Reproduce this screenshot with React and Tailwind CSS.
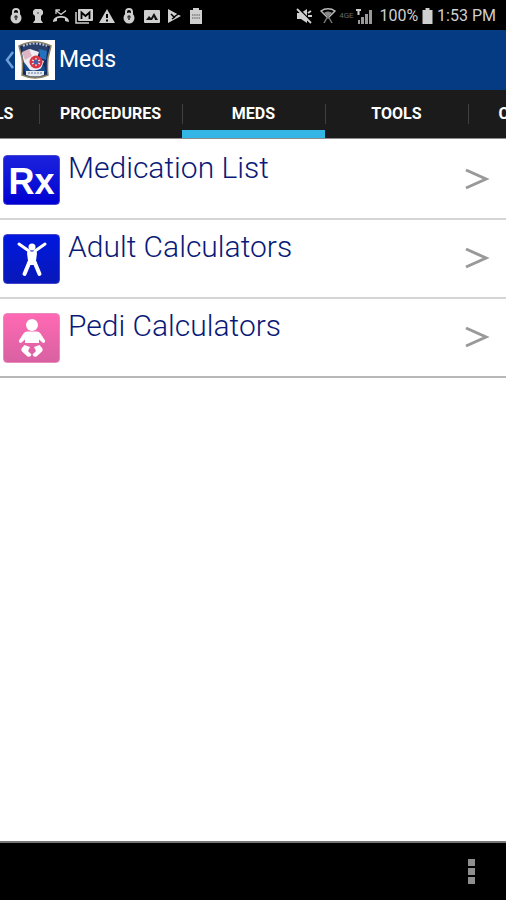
const TABS = ["Protocols", "Procedures", "Meds", "Tools", "Contacts"];

const ITEMS = [
  { label: "Medication List", icon: RxIcon },
  { label: "Adult Calculators", icon: AdultIcon },
  { label: "Pedi Calculators", icon: BabyIcon },
];

function Glyph({ children }) {
  return (
    <svg width="16" height="16" viewBox="0 0 16 16" fill="currentColor" aria-hidden="true">
      {children}
    </svg>
  );
}

function LockGlyph() {
  return (
    <Glyph>
      <path d="M5 7V4a3 3 0 0 1 6 0v3" fill="none" stroke="currentColor" strokeWidth="2" />
      <circle cx="8" cy="10" r="5.5" />
      <circle cx="8" cy="9" r="1.7" fill="#333" />
      <path d="M7 9h2v3H7Z" fill="#555" />
    </Glyph>
  );
}

function NotificationIcons() {
  return (
    <div className="flex w-[196px] items-center justify-between text-[#cfcfcf]">
      <LockGlyph />
      <Glyph>
        <path d="M5 1h6l2 2v3l-2 2v4l2 3H3l2-3V8L3 6V3Z" />
        <circle cx="8" cy="5" r="1" fill="#777" />
      </Glyph>
      <Glyph>
        <path d="M0 14c0-5 5-6 8-6s8 1 8 6l-4-1v-2.500c-2-1-6-1-8 0V13Z" />
        <path d="M3 2.500l5 4 5-4M3 6V2h4" fill="none" stroke="currentColor" strokeWidth="1.300" />
      </Glyph>
      <svg width="18" height="16" viewBox="0 0 18 16" fill="currentColor" aria-hidden="true">
        <path d="M1 4v11h13" fill="none" stroke="currentColor" strokeWidth="1.500" />
        <rect x="3" y="1" width="15" height="12" rx="1" />
        <path d="M6.500 11V4.500l4 3.500 4-3.500V11" fill="none" stroke="#000" strokeWidth="1.800" />
      </svg>
      <Glyph>
        <path d="M8 1l8 14H0Z" />
        <path d="M7 6h2v4H7Zm0 5.500h2v2H7Z" fill="#000" />
      </Glyph>
      <LockGlyph />
      <Glyph>
        <rect y="2" width="16" height="13" rx="1" />
        <path d="M2 12l3-4 2 2 3-5 4 7Z" fill="#111" />
        <path d="M8 12l2-3 1 3Z" fill="#cfcfcf" />
      </Glyph>
      <Glyph>
        <path d="M2 1l13 7L2 15Z" />
        <path d="M5 6l3 3 7-5M6 11l3-2" fill="none" stroke="#000" strokeWidth="1.500" />
      </Glyph>
      <Glyph>
        <path d="M2 2h3V0h6v2h3v14H2Z" />
        <path d="M4 7h8M4 10h8" stroke="#555" strokeWidth="1.200" strokeDasharray="1.500 0.700" />
      </Glyph>
    </div>
  );
}

function SystemIcons() {
  return (
    <div className="flex items-center text-[#cfcfcf]">
      <Glyph>
        <path d="M1 5h4l6-4v14l-6-4H1Z" />
        <path d="M2 0l14 14" stroke="#000" strokeWidth="1.500" />
        <path d="M1 1l14 14M12 5l3-2M12 8h4" stroke="currentColor" strokeWidth="1.800" />
      </Glyph>
      <svg className="ml-2" width="16" height="16" viewBox="0 0 16 16" fill="none" aria-hidden="true">
        <path d="M1 3c4-3 10-3 14 0L8 10Z" stroke="#bbb" strokeWidth="1.500" />
        <path d="M4 5c3-2 5-2 8 0l-4 4Z" fill="#888" />
        <path d="M8 8l-4 7M8 8l4 7" stroke="#777" strokeWidth="1.500" />
      </svg>
      <span className="w-5 text-center text-[8px] leading-none text-[#686868]">4GE</span>
      <svg width="17" height="17" viewBox="0 0 17 17" fill="currentColor" aria-hidden="true">
        <path d="M0 1h5v2H3.500v4h-2V3H0Z" />
        <path d="M2 12h2v4H2ZM5 9h3v7H5ZM9 6h3v10H9ZM13 2h3v14h-3Z" fill="#999" />
      </svg>
      <span className="ml-1.5 text-base">100%</span>
      <svg className="mx-1" width="11" height="16" viewBox="0 0 10 16" fill="currentColor" aria-hidden="true">
        <path d="M3 0h4v2h3v14H0V2h3Z" />
      </svg>
      <span className="text-base">1:53 PM</span>
    </div>
  );
}

function Logo() {
  return (
    <svg width="40" height="40" viewBox="0 0 40 40" aria-hidden="true">
      <rect width="40" height="40" fill="#fff" />
      <path d="M4 6Q20-2 36 6L33 18q-1 10 0 17-13 6-26 0 1-9 0-17Z" fill="#102c63" stroke="#8b8162" strokeWidth="1.500" />
      <path d="M7 7q13-6 26 0l-1 5H8Z" fill="#29416c" />
      <path d="M8 6q12-5 24 0" fill="none" stroke="#b9c3d0" strokeWidth="2" strokeDasharray="2 1.300" />
      <path d="M7 13l8-4 9 3-2 6 7 3-3 8-12 3-5-9Z" fill="#f0eef4" />
      <path d="M7 12l7-3 3 7-7 4Z" fill="#dfb5c4" />
      <path d="M24 9l8 2-1 9-6-2Z" fill="#2471bd" />
      <path d="M9 22l6 8 8 1 6-6 2 7H10Z" fill="#174b8f" />
      <circle cx="21" cy="22" r="6.500" fill="#dc3445" />
      <path d="M21 18v8M17 20l8 4M25 20l-8 4" stroke="#e9eefa" strokeWidth="1.300" />
      <circle cx="21" cy="22" r="2.500" fill="#4460a3" />
      <path d="M11 31h18v4q-9 3-18 0Z" fill="#e6e9ed" />
      <path d="M13 33h14" stroke="#8fa0bd" strokeWidth="1.500" strokeDasharray="2 1" />
    </svg>
  );
}

function RxIcon() {
  return (
    <span
      aria-hidden="true"
      className="flex h-[50px] w-[57px] items-center justify-center rounded-sm border border-[#4444d0] bg-linear-to-b from-[#1a20dc] to-[#0000d2] pt-1 font-['Liberation_Sans',sans-serif] text-4xl font-bold text-white"
    >
      Rx
    </span>
  );
}

function AdultIcon() {
  return (
    <span className="flex h-[50px] w-[57px] items-center justify-center rounded-sm border border-[#4444c8] bg-linear-to-b from-[#0018e0] to-[#0818b8]">
      <svg width="34" height="36" viewBox="0 0 34 36" fill="none" stroke="#fff" strokeLinecap="round" aria-hidden="true">
        <circle cx="17" cy="6" r="3.500" fill="#fff" stroke="none" />
        <path d="M4 3l10 7M30 3l-10 7" strokeWidth="3" />
        <path d="M13 9q4 3 8 0l1 3-1 8 1 4h-10l1-4-1-8Z" fill="#fff" stroke="none" />
        <path d="M14.500 21L9.500 33M19.500 21l5 12" strokeWidth="4" />
      </svg>
    </span>
  );
}

function BabyIcon() {
  return (
    <span className="flex h-[50px] w-[57px] items-center justify-center rounded-sm border border-[#e988bd] bg-linear-to-b from-[#ff69b4] to-[#d861a2]">
      <svg width="30" height="40" viewBox="0 0 30 40" fill="#fff" aria-hidden="true">
        <circle cx="15" cy="7" r="6" />
        <path d="M10 13.500h10q2 0 3.500 2l4.500 7q.5 2-2 2.500l-4-3.500V25H8v-3.500L4 25q-2.500-.5-2-2.500l4.500-7q1.500-2 3.500-2Z" />
        <path d="M7.500 27l5.500 2-2 4 3.500 3.500q-1 3-4 2l-5.500-5q-1-1-.5-3ZM22.500 27L17 29l2 4-3.500 3.500q1 3 4 2l5.500-5q1-1 .5-3Z" />
      </svg>
    </span>
  );
}

export default function App() {
  return (
    <div className="flex min-h-screen flex-col bg-white font-[Roboto,sans-serif]">
      <div className="flex h-[30px] items-center justify-between bg-black pt-0.5 pr-2.5 pl-2">
        <NotificationIcons />
        <SystemIcons />
      </div>

      <header className="flex h-[60px] items-center bg-[#053b82] pl-1">
        <button type="button" aria-label="Back" className="flex items-center">
          <svg width="11" height="24" viewBox="0 0 11 24" fill="none" stroke="#6ea2d8" strokeWidth="2.500" aria-hidden="true">
            <path d="M9 4L3 12l6 8" />
          </svg>
          <Logo />
        </button>
        <h1 className="ml-1 text-[23px] text-white">Meds</h1>
      </header>

      <nav className="flex h-[49px] justify-center overflow-hidden border-b border-[#8c8c8c] bg-[#1b1b1b]">
        {TABS.map((tab) => {
          const active = tab === "Meds";
          return (
            <a
              key={tab}
              href={`#${tab.toLowerCase()}`}
              aria-current={active ? "page" : undefined}
              className={`flex w-[143px] shrink-0 items-center border-b-8 ${active ? "border-[#33b5e5]" : "border-transparent"}`}
            >
              <span className="mt-2 flex h-5 w-full items-center justify-center border-l border-[#404040] text-base font-bold text-white uppercase">
                {tab}
              </span>
            </a>
          );
        })}
      </nav>

      <main className="flex-1 pt-0.5">
        <ul>
          {ITEMS.map(({ label, icon: Icon }) => (
            <li key={label} className="border-b-2 border-[#d5d5d5] last:border-[#b8b8b8]">
              <button type="button" className="flex h-[77px] w-full items-center pr-4 pl-[3px] text-left">
                <Icon />
                <span className="ml-2 flex-1 self-start pt-[7px] text-[30px] leading-10 font-light text-[#0a1a78]">
                  {label}
                </span>
                <svg width="25" height="24" viewBox="0 0 25 24" fill="none" stroke="#999" strokeWidth="3" aria-hidden="true">
                  <path d="M1 2l20 9-20 9" />
                </svg>
              </button>
            </li>
          ))}
        </ul>
      </main>

      <footer className="flex h-[59px] items-center justify-end border-t-2 border-[#777] bg-black pr-[31px]">
        <button type="button" aria-label="More options">
          <svg width="7" height="26" viewBox="0 0 7 26" fill="#8e8e8e" aria-hidden="true">
            <path d="M0 0h7v7H0ZM0 9h7v7H0ZM0 18h7v7H0Z" />
          </svg>
        </button>
      </footer>
    </div>
  );
}
